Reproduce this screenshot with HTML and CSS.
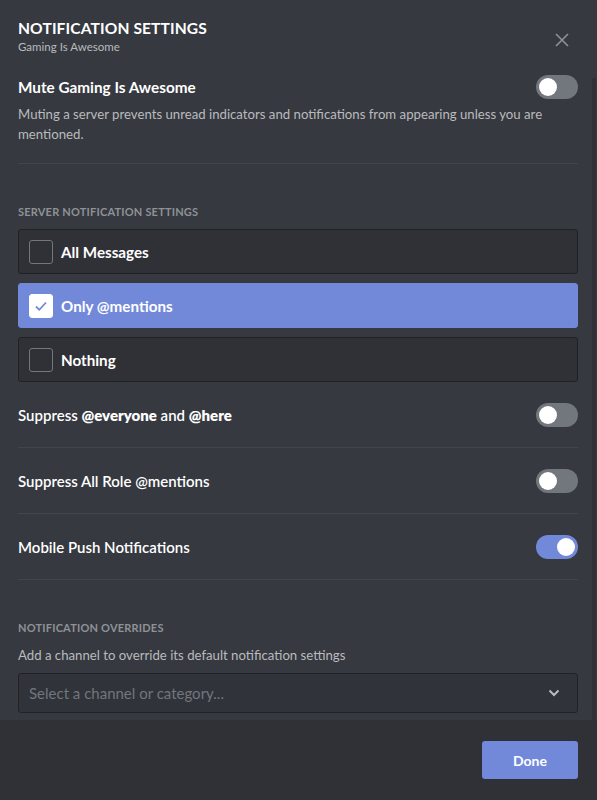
FILE: index.html
```html
<!DOCTYPE html>
<html>
<head>
<meta charset="utf-8">
<link rel="stylesheet" href="styles.css">
</head>
<body>
<div class="modal">
  <div class="header">
    <div class="titles">
      <div class="title">NOTIFICATION SETTINGS</div>
      <div class="subtitle">Gaming Is Awesome</div>
    </div>
    <svg class="close" width="14" height="14" viewBox="0 0 14 14"><path d="M1 1L13 13M13 1L1 13" stroke="#8e9297" stroke-width="1.6" fill="none"/></svg>
  </div>
  <div class="body">
    <div class="content">
      <div class="mute-row">
        <div class="row-label">Mute Gaming Is Awesome</div>
        <div class="toggle"><div class="knob"></div></div>
      </div>
      <div class="desc">Muting a server prevents unread indicators and notifications from appearing unless you are mentioned.</div>
      <div class="divider"></div>
      <div class="section-label">SERVER NOTIFICATION SETTINGS</div>
      <div class="options">
        <div class="option"><div class="check"></div><span>All Messages</span></div>
        <div class="option selected"><div class="check"><svg width="16" height="16" viewBox="0 0 16 16"><path d="M3 8.5L6.3 11.8L13 4.5" stroke="#7289da" stroke-width="1.8" fill="none"/></svg></div><span>Only @mentions</span></div>
        <div class="option"><div class="check"></div><span>Nothing</span></div>
      </div>
      <div class="setting">
        <div class="row-label">Suppress <b>@everyone</b> and <b>@here</b></div>
        <div class="toggle"><div class="knob"></div></div>
      </div>
      <div class="setting">
        <div class="row-label">Suppress All Role @mentions</div>
        <div class="toggle"><div class="knob"></div></div>
      </div>
      <div class="setting">
        <div class="row-label">Mobile Push Notifications</div>
        <div class="toggle on"><div class="knob"></div></div>
      </div>
      <div class="section-label overrides">NOTIFICATION OVERRIDES</div>
      <div class="hint">Add a channel to override its default notification settings</div>
      <div class="select">
        <span>Select a channel or category...</span>
        <svg width="12" height="8" viewBox="0 0 12 8"><path d="M1.5 1.5L6 6L10.5 1.5" stroke="#b9bbbe" stroke-width="2" fill="none"/></svg>
      </div>
    </div>
    <div class="track"></div>
  </div>
  <div class="footer">
    <button class="done">Done</button>
  </div>
</div>
</body>
</html>
```
FILE: styles.css
```css
* { box-sizing: border-box; }
html, body { margin: 0; padding: 0; }
body {
  background: #36393f;
  font-family: "Lato", "Noto Sans", sans-serif;
  color: #fff;
}
.modal {
  width: 597px;
  height: 800px;
  display: flex;
  flex-direction: column;
  background: #36393f;
}
.header {
  height: 70px;
  padding: 19px 28px 0 18px;
  display: flex;
  justify-content: space-between;
  align-items: flex-start;
}
.title {
  font-size: 15.6px;
  font-weight: 700;
  line-height: 18px;
  letter-spacing: 0.1px;
}
.subtitle {
  font-size: 11.5px;
  line-height: 14px;
  color: #b9bbbe;
  margin-top: 3px;
}
.close { margin-top: 14px; }
.body {
  flex: 1;
  display: flex;
  min-height: 0;
}
.content {
  flex: 1;
  padding: 5px 14px 0 18px;
}
.track {
  width: 4px;
  margin: 8px 1px 0 0;
  background: #2f3136;
}
.mute-row, .setting {
  display: flex;
  justify-content: space-between;
  align-items: center;
}
.row-label {
  font-size: 15px;
  font-weight: 700;
  line-height: 20px;
}
.mute-row .row-label { font-size: 15.3px; }
.setting .row-label { font-weight: 600; }
.setting .row-label b { font-weight: 800; }
.toggle {
  width: 42px;
  height: 24px;
  border-radius: 12px;
  background: #72767d;
  padding: 3px;
  display: flex;
}
.knob {
  width: 18px;
  height: 18px;
  border-radius: 50%;
  background: #fff;
}
.toggle.on { background: #7289da; justify-content: flex-end; }
.desc {
  margin-top: 5px;
  font-size: 13.2px;
  line-height: 20px;
  color: #b9bbbe;
  padding-right: 10px;
}
.divider {
  height: 1px;
  background: #42454b;
  margin-top: 19px;
}
.section-label {
  margin-top: 40px;
  font-size: 11px;
  font-weight: 700;
  line-height: 16px;
  color: #8e9297;
  letter-spacing: 0.2px;
}
.options {
  margin-top: 9px;
  display: flex;
  flex-direction: column;
  gap: 9px;
}
.option {
  height: 45px;
  border: 1px solid #202225;
  border-radius: 3px;
  background: #2f3136;
  display: flex;
  align-items: center;
  padding-left: 10px;
  gap: 8px;
  font-size: 15.2px;
  font-weight: 700;
}
.option.selected { background: #7289da; border-color: #7289da; }
.check {
  width: 24px;
  height: 24px;
  border: 1px solid #72767d;
  border-radius: 3px;
  display: flex;
  align-items: center;
  justify-content: center;
}
.option.selected .check { background: #fff; border-color: #fff; }
.setting {
  padding: 21px 0 20px;
  border-bottom: 1px solid #42454b;
}
.hint {
  margin-top: 9px;
  font-size: 13.2px;
  line-height: 20px;
  color: #b9bbbe;
}
.select {
  margin-top: 8px;
  height: 40px;
  border: 1px solid #202225;
  border-radius: 3px;
  background: #303339;
  display: flex;
  align-items: center;
  justify-content: space-between;
  padding: 0 17px 0 10px;
  font-size: 15px;
  color: #72767d;
}
.footer {
  height: 80px;
  background: #2f3136;
  display: flex;
  justify-content: flex-end;
  align-items: flex-start;
  padding: 21px 19px 0 0;
}
.done {
  width: 96px;
  height: 38px;
  border: none;
  border-radius: 3px;
  background: #7289da;
  color: #fff;
  font-family: "Lato", "Noto Sans", sans-serif;
  font-size: 14px;
  font-weight: 700;
}
```
